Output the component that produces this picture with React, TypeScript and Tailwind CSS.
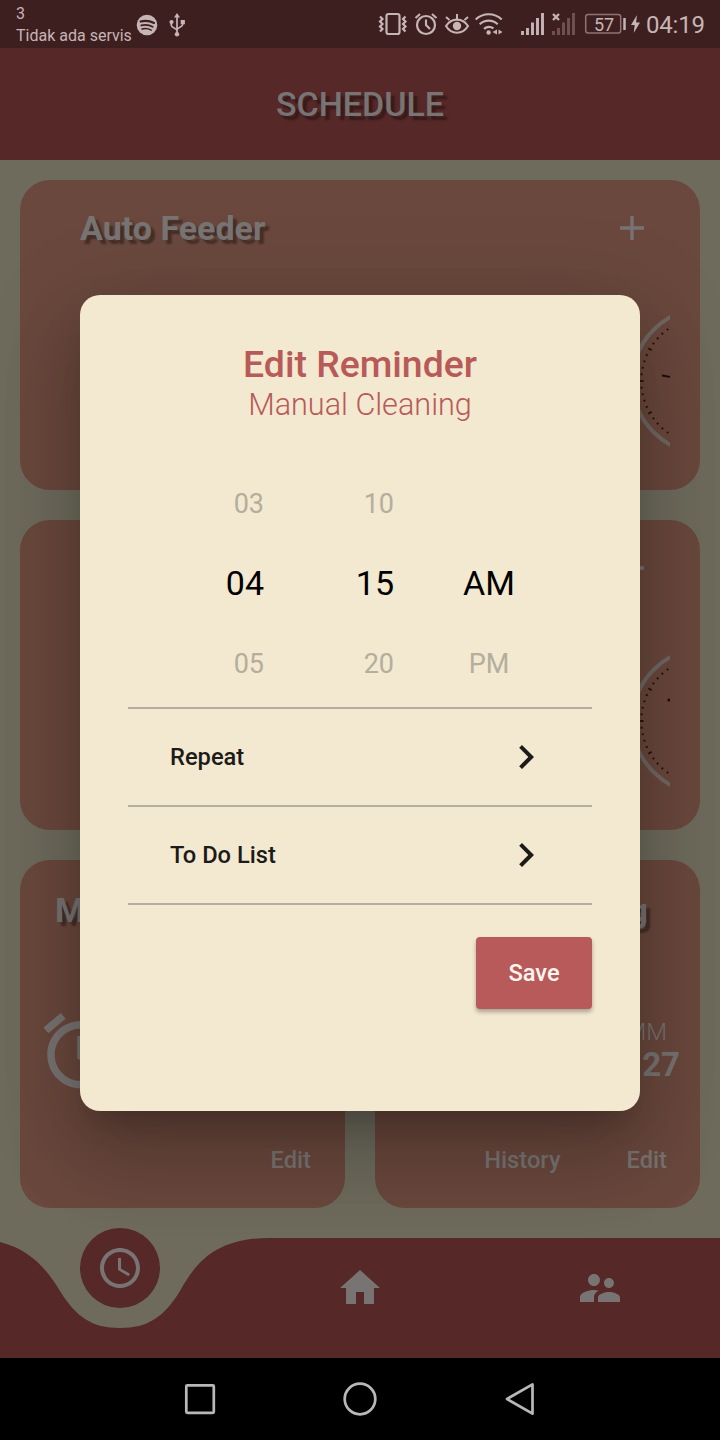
import type { ReactNode } from "react";
import { MdAccessTime, MdAlarm, MdChevronRight } from "react-icons/md";

const TITLE_SHADOW = "[text-shadow:4px_4px_2px_rgba(0,0,0,0.36)]";

function StatusBar() {
  return (
    <div className="flex h-12 items-center bg-[#3e1f1f] pl-4 text-[#c6b5b5]">
      <div className="flex w-[120px] flex-col whitespace-nowrap pt-0.5 text-base leading-[22px]">
        <span className="-mt-px">3</span>
        <span>Tidak ada servis</span>
      </div>
      <svg className="h-12 w-[60px]" viewBox="136 0 60 48">
        <circle cx="147" cy="25" r="10.3" fill="#c6b5b5" />
        <g fill="none" stroke="#3e1f1f" strokeLinecap="round">
          <path d="M140.5 21.6c4.5-1.2 9.5-.7 13.5 1.4" strokeWidth="2.1" />
          <path d="M141.3 25.4c3.8-1 8-.5 11.3 1.3" strokeWidth="1.8" />
          <path d="M142 29c3.2-.8 6.4-.4 9.2 1.1" strokeWidth="1.5" />
        </g>
        <g fill="none" stroke="#c6b5b5" strokeWidth="1.7">
          <path d="M177 15v19M171.3 22v3.2c0 2.8 5.7 2.6 5.7 5.4M182.7 22v2.5c0 2.8-5.7 2.6-5.7 5.4" />
        </g>
        <g fill="#c6b5b5">
          <path d="M177 13l3 4.5h-6z" />
          <circle cx="177" cy="34.2" r="2.2" />
          <circle cx="171.5" cy="22" r="2.1" />
          <path d="M180.7 20h4.2v4.2h-4.2z" />
        </g>
      </svg>
      <svg className="ml-auto h-12 w-[270px]" viewBox="376 0 270 48" fill="none" stroke="#c6b5b5">
        <rect x="386.5" y="14" width="13" height="20" rx="2" strokeWidth="2.2" />
        <path d="M380 16.5l2.5 2.5-2.5 2.5 2.5 2.5-2.5 2.5 2.5 2.5-2.5 2.5M405.5 16.5L403 19l2.5 2.5L403 24l2.5 2.5L403 29l2.5 2.5" strokeWidth="2.2" />
        <circle cx="426" cy="25" r="9" strokeWidth="2.2" />
        <path d="M426 19.5V25l4 4M415.5 18l4.5-4M436.5 18l-4.5-4" strokeWidth="2.1" />
        <path d="M446 26c5.5-8.5 16.5-8.5 22 0-5.5 9-16.5 9-22 0z" strokeWidth="2.1" />
        <circle cx="457" cy="26" r="4.2" fill="#c6b5b5" stroke="none" />
        <path d="M457 19v-5M449.5 20l-3.5-3M464.5 20l3.5-3" strokeWidth="2" />
        <path d="M475.7 19.5c7.3-7 18.7-7 26 0M479.7 24.3c5.2-4.8 12.8-4.8 18 0M484 28.8c3-2.5 6.5-2.5 9.5-.4" strokeWidth="2.2" />
        <circle cx="488.6" cy="32.5" r="2.2" fill="#c6b5b5" stroke="none" />
        <path d="M497 29.5v5l-4.5-2.5zM498.5 29.5v5l4-2.5z" fill="#c6b5b5" stroke="none" />
        <path d="M522.5 35v-4M527.5 35v-7M532.5 35V22.5M537.5 35V18M542.5 35V13" strokeWidth="2.9" />
        <path d="M553.5 35v-4M558.5 35v-7M563.5 35V22.5M568.5 35V18M573.5 35V13" strokeWidth="2.9" stroke="#6f5252" />
        <path d="M553 14l6 6M559 14l-6 6" strokeWidth="2.3" />
        <rect x="585.7" y="14.5" width="35" height="18.5" rx="2.5" strokeWidth="1.5" stroke="#8d7474" />
        <path d="M624.5 18v12" strokeWidth="2.5" />
        <path d="M637 15l-6 10h3.7l-1 8 6.3-10.5h-3.9z" fill="#c6b5b5" stroke="none" />
        <text x="594" y="30.5" fill="#c6b5b5" stroke="none" fontSize="18" fontFamily="Roboto, sans-serif">57</text>
      </svg>
      <span className="w-[74px] pt-0.5 text-2xl tracking-[-0.2px]">04:19</span>
    </div>
  );
}

function Dial({ children }: { children: ReactNode }) {
  const ticks = Array.from({ length: 60 }, (_, i) => i);
  return (
    <svg className="mr-[30px] h-[150px] w-[40px]" viewBox="0 0 40 150">
      <circle cx="75" cy="75" r="72.5" fill="none" stroke="#726864" strokeWidth="4" />
      {ticks.map((i) => (
        <line
          key={i}
          x1={i % 5 === 0 ? 9.5 : 10.3}
          x2={i % 5 === 0 ? 13.5 : 12.3}
          y1="75"
          y2="75"
          stroke="#2b0f0c"
          strokeWidth="1.8"
          transform={`rotate(${i * 6} 75 75)`}
        />
      ))}
      {children}
    </svg>
  );
}

function FeederCard({ title, children }: { title: string; children: ReactNode }) {
  return (
    <section className="flex h-[310px] flex-col rounded-[30px] bg-[#6a483d]">
      <div className="flex h-24 items-center justify-between pl-[60px] pr-14">
        <h2 className={`text-[34px] font-bold ${TITLE_SHADOW}`}>{title}</h2>
        <svg className="size-6" viewBox="0 0 24 24" stroke="currentColor" strokeWidth="3.3">
          <path d="M12 0v24M0 12h24" />
        </svg>
      </div>
      <div className="mt-[30px] flex justify-end">
        <Dial>{children}</Dial>
      </div>
    </section>
  );
}

function TabBar() {
  return (
    <nav className="grid h-[130px] w-full">
      <svg className="col-start-1 row-start-1 h-[130px] w-[720px]" viewBox="0 1228 720 130">
        <path
          fill="#562828"
          d="M0 1242C28 1249 45 1266 60 1291C76 1317 92 1328 120 1328C148 1328 164 1317 180 1291C198 1258 220 1238 270 1238H720V1358H0Z"
        />
        <circle cx="120" cy="1268" r="40" fill="#562828" />
      </svg>
      <div className="col-start-1 row-start-1 grid grid-cols-3 justify-items-center">
        <MdAccessTime className="mt-4 size-12" />
        <svg className="mt-9 size-12" viewBox="0 0 24 24" fill="currentColor">
          <path d="M10 20v-6h4v6h5v-8h3L12 3 2 12h3v8z" />
        </svg>
        <svg className="mt-9 size-12" viewBox="0 0 24 24" fill="currentColor">
          <path d="M16.5 12c1.38 0 2.49-1.12 2.49-2.5S17.88 7 16.5 7C15.12 7 14 8.12 14 9.5s1.12 2.5 2.5 2.5zM9 11c1.66 0 2.99-1.34 2.99-3S10.66 5 9 5C7.34 5 6 6.34 6 8s1.34 3 3 3zm7.5 3c-1.83 0-5.5.92-5.5 2.75V19h11v-2.25c0-1.83-3.67-2.75-5.5-2.75zM9 13c-2.33 0-7 1.17-7 3.5V19h7v-2.25c0-.85.33-2.34 2.37-3.47C10.5 13.1 9.66 13 9 13z" />
        </svg>
      </div>
    </nav>
  );
}

function SystemNav() {
  return (
    <div className="flex h-[82px] items-center justify-center bg-black">
      <svg className="h-10 w-[400px]" viewBox="160 1379 400 40" fill="none" stroke="#b8b8b8" strokeWidth="2.7" strokeLinejoin="round">
        <rect x="186.3" y="1385.3" width="27.5" height="27.5" rx="1" />
        <circle cx="360" cy="1399" r="15.3" />
        <path d="M532.5 1384.3v29.4L507 1399z" />
      </svg>
    </div>
  );
}

function MenuRow({ label }: { label: string }) {
  return (
    <div className="flex h-[98px] items-center justify-between border-b-2 border-[#b4ae9c] px-[42px] text-[23.7px] font-medium text-[#1c1b19]">
      <span className="pt-0.5">{label}</span>
      <MdChevronRight className="size-12" />
    </div>
  );
}

function WheelColumn({ before, value, after, className }: { before: string; value: string; after: string; className: string }) {
  return (
    <div className={`flex flex-col text-[27px] leading-[80px] text-[#b4ae9c] ${className}`}>
      <span className="h-20">{before}</span>
      <span className="-mt-px h-20 text-[34px] text-black">{value}</span>
      <span className="mt-px h-20">{after}</span>
    </div>
  );
}

function ReminderDialog() {
  return (
    <div
      role="dialog"
      className="absolute left-20 top-[295px] flex h-[816px] w-[560px] flex-col rounded-[20px] bg-[#f3e8d0] px-12 pt-12 shadow-[0_22px_30px_-14px_rgba(0,0,0,0.2),0_48px_76px_6px_rgba(0,0,0,0.14),0_18px_92px_16px_rgba(0,0,0,0.12)]"
    >
      <h3 className="text-center text-[37.4px] font-medium leading-[42px] text-[#b85a58]">Edit Reminder</h3>
      <p className="mt-px text-center text-[30.6px] font-light leading-[38px] text-[#b85a58]">Manual Cleaning</p>
      <div className="mt-10 flex h-[245px] border-b-2 border-[#b4ae9c]">
        <WheelColumn className="w-[136px] items-end" before="03" value="04" after="05" />
        <WheelColumn className="w-[130px] items-end" before="10" value="15" after="20" />
        <WheelColumn className="ml-[45px] w-[100px] items-center" before="" value="AM" after="PM" />
      </div>
      <MenuRow label="Repeat" />
      <MenuRow label="To Do List" />
      <button className="mt-8 h-[72px] w-[116px] self-end rounded bg-[#b95a5a] pt-0.5 text-[23.7px] font-medium text-[#fdf5f0] shadow-[0_3px_4px_rgba(0,0,0,0.3)]">
        Save
      </button>
    </div>
  );
}

export default function App() {
  return (
    <div className="relative flex h-[1440px] w-[720px] flex-col overflow-hidden bg-[#6e6b5d] font-[Roboto,sans-serif] text-[#787473]">
      <StatusBar />
      <header className="flex h-28 items-center justify-center bg-[#562828]">
        <h1 className={`text-[34px] font-medium ${TITLE_SHADOW}`}>SCHEDULE</h1>
      </header>
      <main className="flex flex-1 flex-col gap-[30px] px-5 pt-5">
        <FeederCard title="Auto Feeder">
          <path d="M32 69.5l8 1.3" stroke="#1d0c08" strokeWidth="1.8" />
        </FeederCard>
        <FeederCard title="">
          <circle cx="39" cy="54" r="1.6" fill="#1d0c08" />
        </FeederCard>
        <div className="flex gap-[30px]">
          <section className="flex h-[348px] w-[325px] flex-col rounded-[30px] bg-[#6a483d]">
            <h2 className={`mt-[30px] pl-[35px] text-[34px] font-bold leading-10 ${TITLE_SHADOW}`}>Manual</h2>
            <MdAlarm className="ml-4 mt-[76px] size-[90px]" />
            <span className="mr-[34px] mt-auto self-end pb-8 text-[23.7px] font-medium leading-8">Edit</span>
          </section>
          <section className="flex h-[348px] w-[325px] flex-col items-end rounded-[30px] bg-[#6a483d]">
            <h2 className={`mr-[52px] mt-[30px] text-[34px] font-bold leading-10 ${TITLE_SHADOW}`}>Cleaning</h2>
            <span className="mr-[33px] mt-[86px] text-2xl font-light leading-8">MM</span>
            <span className="mr-5 mt-px text-[33px] font-bold leading-8">27</span>
            <div className="mt-auto flex gap-[66px] pb-8 pr-[33px] text-[23.7px] font-medium leading-8">
              <span>History</span>
              <span>Edit</span>
            </div>
          </section>
        </div>
      </main>
      <TabBar />
      <SystemNav />
      <ReminderDialog />
    </div>
  );
}
